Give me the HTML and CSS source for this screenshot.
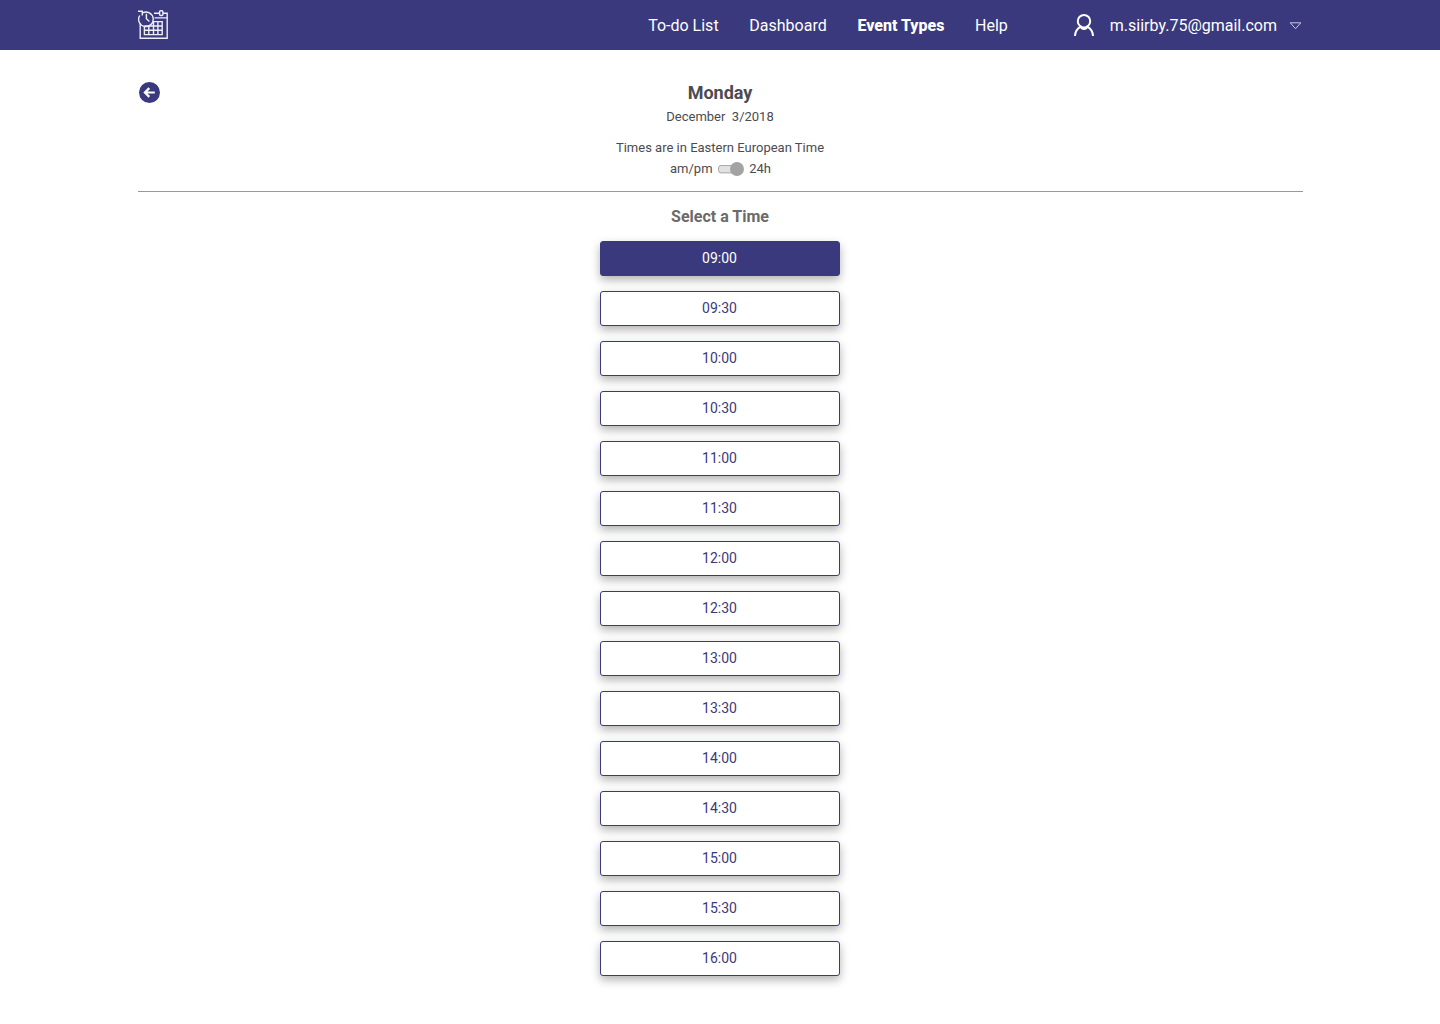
FILE: index.html
```html
<!DOCTYPE html>
<html lang="en">
<head>
<meta charset="utf-8">
<title>Select a Time</title>
<link rel="stylesheet" href="styles.css">
</head>
<body>
<header class="topbar">
  <div class="container topbar-inner">
    <a class="logo" aria-label="Home">
      <svg width="30" height="30" viewBox="0 0 30 30" fill="none" stroke="currentColor" stroke-width="1.4">
        <path d="M16 3.2H21.3M25 3.2H29.2V28.3H2.2V14M16.5 7.9H29"/>
        <rect x="21.6" y=".7" width="3.3" height="4.8" rx="1"/>
        <path d="M4.6 2.8A7.3 7.3 0 1 1 1.7 5.5"/>
        <path d="M0 1.3H4.3V5.4M8.4 3.8V8.8L11.4 11.6"/>
        <path d="M15.2 11.6H24.2V24.6H6.4V16.6M6.4 16H24.2M6.4 20.2H24.2M10.8 15.5V24.6M15.5 11.6V24.6M19.9 11.6V24.6"/>
      </svg>
    </a>
    <nav class="nav">
      <a>To-do List</a>
      <a>Dashboard</a>
      <a class="active">Event Types</a>
      <a>Help</a>
    </nav>
    <div class="account">
      <svg class="avatar" width="22" height="24" viewBox="0 0 22 24" fill="none" stroke="currentColor" stroke-width="2">
        <circle cx="11" cy="8.2" r="6.2"/>
        <path d="M2 23C2.2 18.4 4.6 15.4 7.8 13.7C8.8 16.6 13.2 16.6 14.2 13.7C17.4 15.4 19.8 18.4 20 23"/>
      </svg>
      <span class="email">m.siirby.75@gmail.com</span>
      <svg class="caret" width="13" height="8" viewBox="0 0 13 8" fill="none" stroke="currentColor"><path d="M1.2 .8H11.8L6.5 6.7Z"/></svg>
    </div>
  </div>
</header>
<main class="container">
  <section class="heading">
    <button class="back" aria-label="Back">
      <svg width="22" height="22" viewBox="0 0 22 22"><circle cx="10.5" cy="10.5" r="10.5" fill="#3b397d"/><path d="M15.8 10.5H6M10.3 6.1L5.9 10.5L10.3 14.9" fill="none" stroke="#fff" stroke-width="2.2"/></svg>
    </button>
    <div class="details">
      <h1>Monday</h1>
      <p class="date">December&nbsp; 3/2018</p>
      <p class="zone">Times are in Eastern European Time</p>
      <div class="format"><span>am/pm</span>
        <svg class="toggle" width="26" height="14" viewBox="0 0 26 14"><rect x=".5" y="3.5" width="22" height="7.4" rx="2.5" fill="#e1e1e1" stroke="#a9a9a9"/><circle cx="19" cy="7" r="7" fill="#a3a3a3"/></svg>
        <span>24h</span></div>
    </div>
  </section>
  <section class="picker">
    <h2>Select a Time</h2>
    <div class="slots">
      <button class="slot selected">09:00</button>
      <button class="slot">09:30</button>
      <button class="slot">10:00</button>
      <button class="slot">10:30</button>
      <button class="slot">11:00</button>
      <button class="slot">11:30</button>
      <button class="slot">12:00</button>
      <button class="slot">12:30</button>
      <button class="slot">13:00</button>
      <button class="slot">13:30</button>
      <button class="slot">14:00</button>
      <button class="slot">14:30</button>
      <button class="slot">15:00</button>
      <button class="slot">15:30</button>
      <button class="slot">16:00</button>
    </div>
  </section>
</main>
</body>
</html>
```
FILE: styles.css
```css
* { box-sizing: border-box; }
body { margin: 0; min-height: 1024px; background: #fff; color: #4b4b50; font-family: Roboto, sans-serif; }
h1, h2, p { margin: 0; }
button { font-family: inherit; }
svg { display: block; flex: none; }
.container { width: 1165px; margin-left: 138px; }
.topbar { height: 50px; background: #3b397d; color: #fff; }
.topbar-inner { height: 50px; display: flex; align-items: center; padding-right: 1px; }
.logo { color: #eeeef8; margin-right: auto; }
.nav { display: flex; gap: 30.7px; font-size: 16px; line-height: 20px; padding-top: 1px; }
.active { font-weight: 800; }
.account { display: flex; align-items: center; margin-left: 65px; }
.email { margin: 1px 12px 0 15px; font-size: 16px; line-height: 20px; }
.caret { color: #c9c8e6; margin-top: 1px; }
.heading { display: grid; grid-template-columns: 22px 1fr 22px; height: 142px; padding: 31px 1px 0 0; border-bottom: 1px solid #9797ac; }
.back { width: 22px; height: 22px; margin: 1px 0 0 1px; padding: 0; border: 0; background: none; }
.details { display: flex; flex-direction: column; align-items: center; font-size: 13px; line-height: 16px; }
h1 { font-size: 18px; line-height: 24px; }
.date { margin-top: 4px; }
.zone { margin-top: 15px; }
.format { display: flex; align-items: center; gap: 5.3px; margin: 5px 0 0 1px; }
.picker { display: flex; flex-direction: column; align-items: center; padding: 15px 1px 48px 0; }
h2 { font-size: 16px; line-height: 20px; color: #6a6a6a; }
.slots { display: grid; gap: 15px; margin-top: 14px; }
.slot { width: 240px; height: 35px; padding: 0 1px 1px 0; border: 1px solid #3b397d; border-radius: 3px; background: #fff; color: #3b397d; font-size: 14px; line-height: 20px; box-shadow: 0 4px 10px rgba(0, 0, 0, .3); }
.selected { background: #3b397d; color: #fff; }
```
